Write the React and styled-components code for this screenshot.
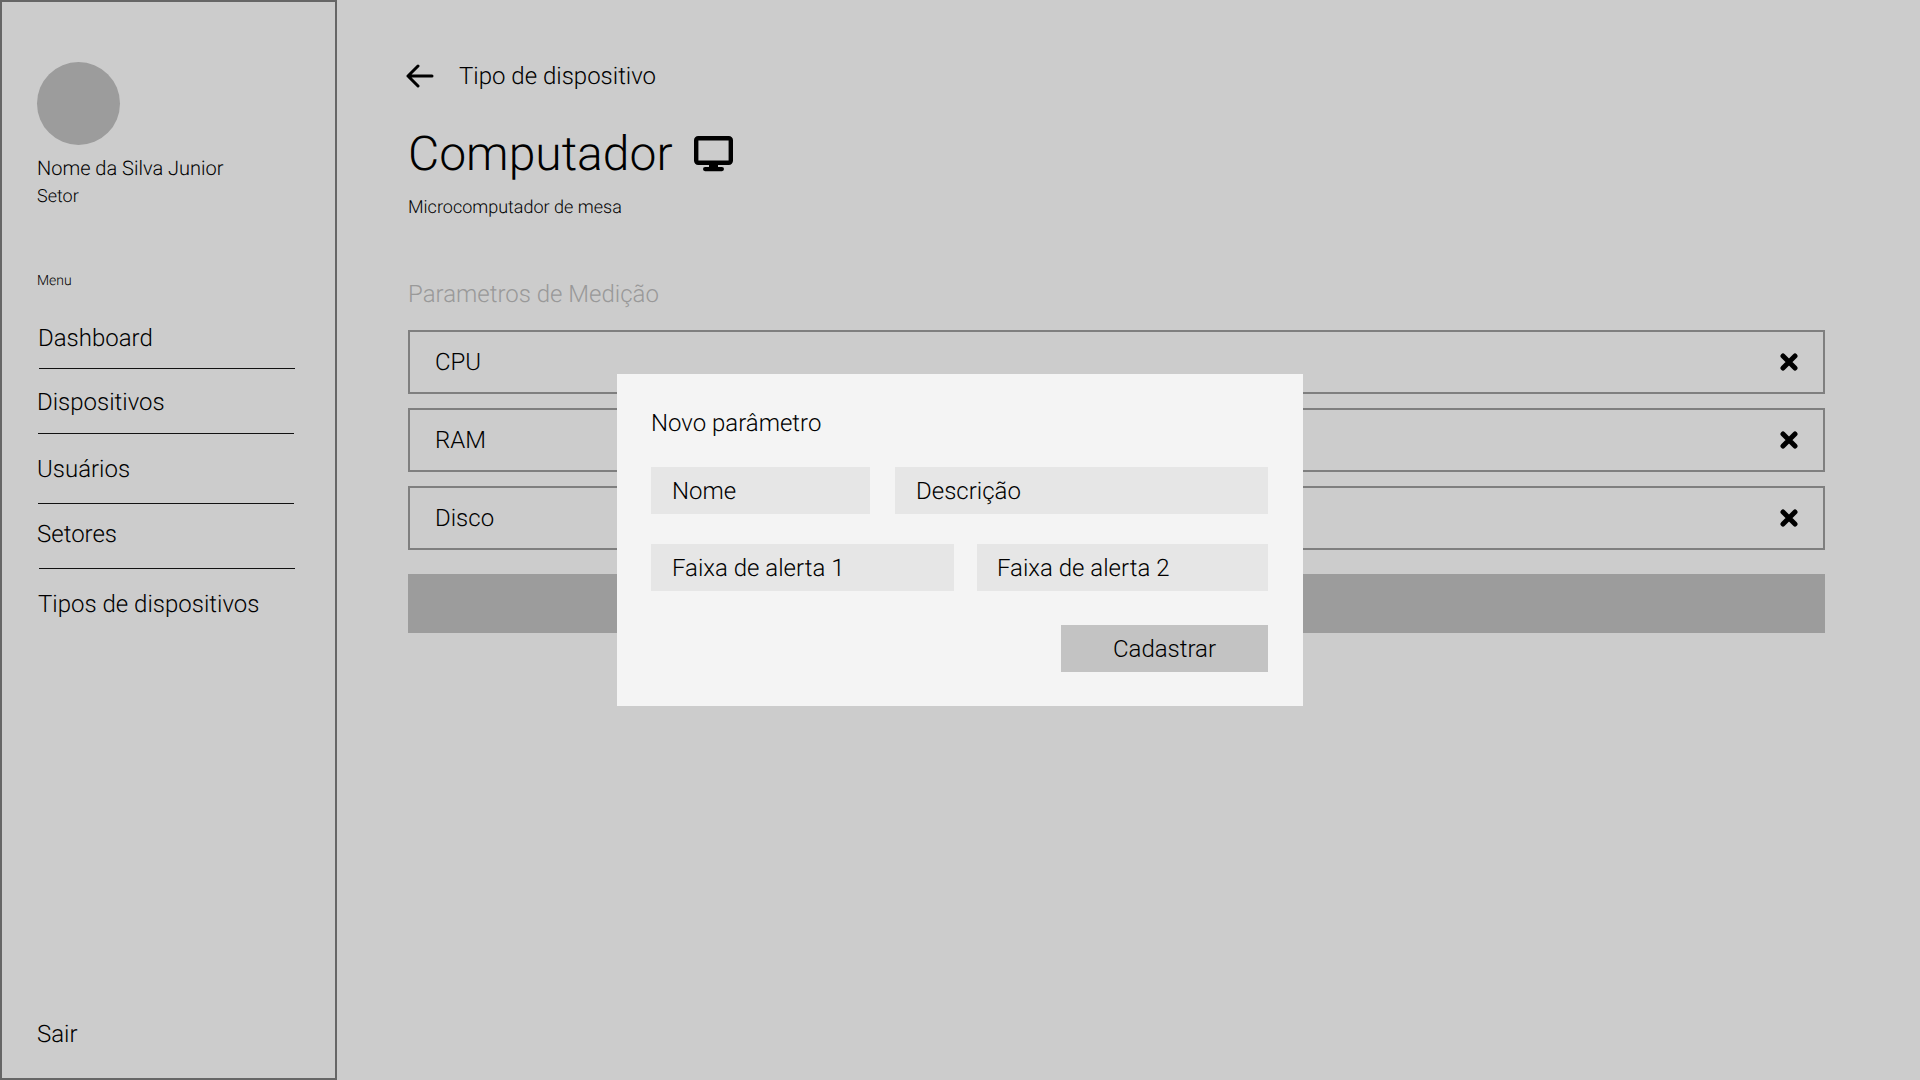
import React from "react";
import styled, { createGlobalStyle } from "styled-components";

const Global = createGlobalStyle`
  html, body { margin: 0; padding: 0; height: 100%; background: #ccc; }
  * { box-sizing: border-box; }
  body { font-family: Roboto, "Noto Sans", sans-serif; color: #000; font-weight: 300; text-rendering: geometricPrecision; }
`;

const Page = styled.div`
  display: flex;
  width: 1920px;
  height: 1080px;
  overflow: hidden;
  background: #ccc;
`;

const Sidebar = styled.aside`
  flex: 0 0 337px;
  height: 1080px;
  border: 2px solid #666;
  padding: 60px 0 29px 35px;
  display: flex;
  flex-direction: column;
`;

const Avatar = styled.div`
  width: 83px;
  height: 83px;
  border-radius: 50%;
  background: #9c9c9c;
`;

const UserName = styled.div`
  margin-top: 9px;
  font-size: 20px;
  line-height: 28px;
`;

const UserSector = styled.div`
  margin-top: 2px;
  font-size: 18px;
  line-height: 26px;
`;

const MenuLabel = styled.div`
  margin-top: 61px;
  font-size: 14px;
  line-height: 20px;
`;

const Nav = styled.nav`
  display: flex;
  flex-direction: column;
  margin-top: 32px;
`;

const NavItem = styled.a`
  display: block;
  width: 256px;
  margin-left: ${(p) => p.$indent}px;
  padding-bottom: ${(p) => p.$below}px;
  margin-bottom: ${(p) => p.$gap}px;
  font-size: 24px;
  line-height: 30px;
  text-indent: ${(p) => p.$shift}px;
  border-bottom: ${(p) => (p.$last ? "none" : "1px solid #111")};
`;

const Logout = styled.div`
  margin-top: auto;
  font-size: 24px;
  line-height: 30px;
`;

const Main = styled.main`
  flex: 1;
  padding: 60px 95px 0 71px;
`;

const Back = styled.div`
  display: flex;
  align-items: center;
  gap: 25px;
  height: 32px;
  font-size: 24px;
  margin-left: -2px;
`;

const TitleRow = styled.div`
  display: flex;
  align-items: center;
  gap: 21px;
  margin-top: 31px;
  height: 62px;
`;

const Title = styled.h1`
  margin: 0;
  font-size: 48px;
  font-weight: 300;
  line-height: 62px;
`;

const Subtitle = styled.div`
  margin-top: 11px;
  font-size: 18px;
  line-height: 24px;
`;

const SectionLabel = styled.div`
  margin-top: 58px;
  font-size: 24px;
  line-height: 32px;
  color: #999;
`;

const List = styled.div`
  display: flex;
  flex-direction: column;
  gap: 14px;
  margin-top: 20px;
`;

const Row = styled.div`
  display: flex;
  align-items: center;
  justify-content: space-between;
  height: 64px;
  padding: 0 25px 0 25px;
  border: 2px solid #7f7f7f;
  font-size: 24px;
`;

const AddBar = styled.div`
  height: 59px;
  margin-top: 24px;
  background: #9c9c9c;
`;

const Overlay = styled.div`
  position: fixed;
  inset: 0;
  display: flex;
  align-items: center;
  justify-content: center;
`;

const Modal = styled.div`
  width: 686px;
  height: 332px;
  padding: 33px 35px 0 34px;
  background: #f4f4f4;
  display: flex;
  flex-direction: column;
`;

const ModalTitle = styled.div`
  font-size: 24px;
  line-height: 32px;
`;

const FieldRow = styled.div`
  display: flex;
  gap: ${(p) => p.$gap}px;
  margin-top: ${(p) => p.$top}px;
`;

const Field = styled.div`
  flex: ${(p) => `0 0 ${p.$width}px`};
  height: 47px;
  padding-left: ${(p) => p.$pad}px;
  display: flex;
  align-items: center;
  background: #e6e6e6;
  font-size: 24px;
`;

const SubmitRow = styled.div`
  display: flex;
  justify-content: flex-end;
  margin-top: 34px;
`;

const Submit = styled.button`
  width: 207px;
  height: 47px;
  border: 0;
  padding: 0;
  background: #c3c3c3;
  color: inherit;
  font: inherit;
  font-size: 24px;
`;

const ArrowIcon = () => (
  <svg width="28" height="24" viewBox="0 0 28 24" fill="none" stroke="#000" strokeWidth="3" strokeLinecap="round" strokeLinejoin="round">
    <path d="M2 12h24M12 2 2 12l10 10" />
  </svg>
);

const MonitorIcon = () => (
  <svg width="39" height="36" viewBox="0 0 39 36" fill="none">
    <rect x="2.2" y="2.2" width="34.6" height="24.6" rx="2" stroke="#000" strokeWidth="4.4" />
    <path d="M15 27h9v5h-9z" fill="#000" />
    <rect x="9" y="31" width="21" height="4.2" rx="2.1" fill="#000" />
  </svg>
);

const CloseIcon = () => (
  <svg width="18" height="18" viewBox="0 0 18 18" fill="none" stroke="#000" strokeWidth="5" strokeLinecap="round">
    <path d="M3 3l12 12M15 3 3 15" />
  </svg>
);

const navItems = [
  { label: "Dashboard", indent: 2, shift: -1, below: 15, gap: 18 },
  { label: "Dispositivos", indent: 1, shift: -1, below: 16, gap: 20 },
  { label: "Usuários", indent: 1, shift: -1, below: 19, gap: 15 },
  { label: "Setores", indent: 2, shift: -2, below: 19, gap: 20 },
  { label: "Tipos de dispositivos", indent: 2, shift: -1, below: 0, gap: 0, last: true },
];

export default function App() {
  return (
    <Page>
      <Global />
      <Sidebar>
        <Avatar />
        <UserName>Nome da Silva Junior</UserName>
        <UserSector>Setor</UserSector>
        <MenuLabel>Menu</MenuLabel>
        <Nav>
          {navItems.map((n) => (
            <NavItem key={n.label} $indent={n.indent} $shift={n.shift} $below={n.below} $gap={n.gap} $last={n.last}>
              {n.label}
            </NavItem>
          ))}
        </Nav>
        <Logout>Sair</Logout>
      </Sidebar>
      <Main>
        <Back>
          <ArrowIcon />
          Tipo de dispositivo
        </Back>
        <TitleRow>
          <Title>Computador</Title>
          <MonitorIcon />
        </TitleRow>
        <Subtitle>Microcomputador de mesa</Subtitle>
        <SectionLabel>Parametros de Medição</SectionLabel>
        <List>
          {["CPU", "RAM", "Disco"].map((r) => (
            <Row key={r}>
              {r}
              <CloseIcon />
            </Row>
          ))}
        </List>
        <AddBar />
      </Main>
      <Overlay>
        <Modal>
          <ModalTitle>Novo parâmetro</ModalTitle>
          <FieldRow $gap={25} $top={28}>
            <Field $width={219} $pad={21}>Nome</Field>
            <Field $width={373} $pad={21}>Descrição</Field>
          </FieldRow>
          <FieldRow $gap={23} $top={30}>
            <Field $width={303} $pad={21}>Faixa de alerta 1</Field>
            <Field $width={291} $pad={20}>Faixa de alerta 2</Field>
          </FieldRow>
          <SubmitRow>
            <Submit>Cadastrar</Submit>
          </SubmitRow>
        </Modal>
      </Overlay>
    </Page>
  );
}
